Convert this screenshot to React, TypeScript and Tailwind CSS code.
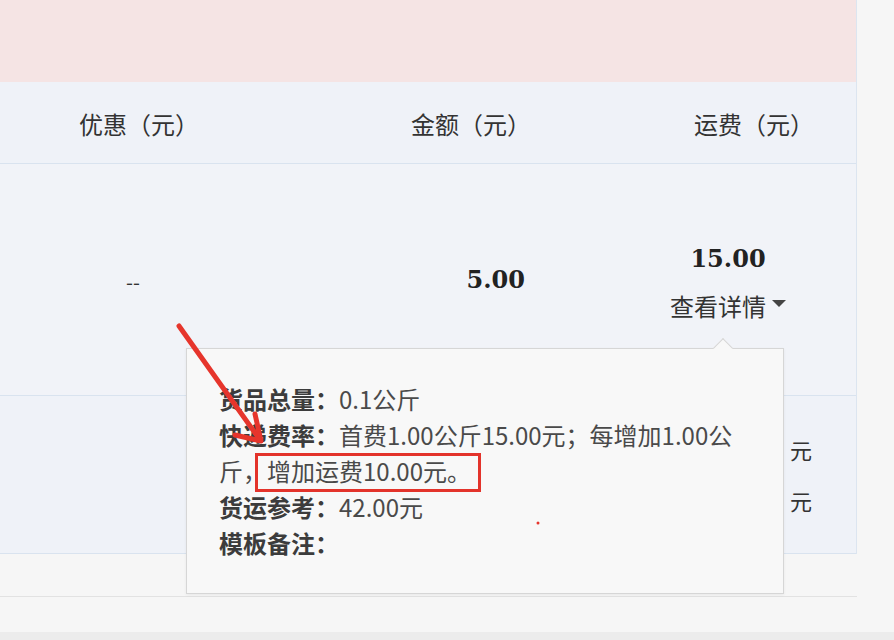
const cjk = "font-['Noto_Sans_CJK_SC','Noto_Sans',sans-serif]";
const num = "font-['DejaVu_Serif',serif] font-bold";

const FreightPopover = () => {
  const rows = [
    { label: '货品总量：', value: '0.1公斤' },
    { label: '快递费率：', value: '首费1.00公斤15.00元；每增加1.00公' },
  ];

  return (
    <div className="absolute left-[186px] top-[348px] w-[598px] h-[246px] border border-[#d6d6d6] bg-[#f8f8f8] shadow-[0_1px_3px_rgba(0,0,0,0.06)]">
      {/* little pointer up to 查看详情 */}
      <div className="absolute left-[529px] -top-[8px] w-[14px] h-[14px] rotate-45 border-l border-t border-[#d6d6d6] bg-[#f8f8f8]"></div>

      <div className={`relative pl-[32px] pt-[32px] text-[24px] leading-[36px] text-[#4a4a4a] ${cjk}`}>
        {rows.map((row, i) => (
          <div key={i} className="whitespace-nowrap">
            <span className="font-bold text-[#3c3c3c]">{row.label}</span>
            <span>{row.value}</span>
          </div>
        ))}
        <div className="whitespace-nowrap">斤，增加运费10.00元。</div>
        <div className="whitespace-nowrap">
          <span className="font-bold text-[#3c3c3c]">货运参考：</span>
          <span>42.00元</span>
        </div>
        <div>
          <span className="font-bold text-[#3c3c3c]">模板备注：</span>
        </div>
      </div>

      {/* annotation box */}
      <div className="absolute left-[68px] top-[104px] w-[226px] h-[39px] border-[3px] border-[#e3332b]"></div>
    </div>
  );
};

const App = () => {
  return (
    <div className={`relative w-[894px] h-[640px] overflow-hidden bg-[#f6f6f6] flex flex-col ${cjk}`}>
      <div className="w-[857px] border-r border-[#dce5f0]">
        <div className="h-[82px] bg-[#f5e4e4]"></div>

        <div className="h-[82px] grid grid-cols-[266px_334px_256px] items-center bg-[#eff2f8] border-b border-[#d9e3ef] text-[24px] text-[#333] pt-[2px]">
          <div className="text-center pl-[12px]">优惠（元）</div>
          <div className="text-right pr-[69px]">金额（元）</div>
          <div className="text-right pr-[42px]">运费（元）</div>
        </div>

        <div className="h-[232px] grid grid-cols-[266px_334px_256px] items-center bg-[#f1f3f8] border-b border-[#d9e3ef] text-[#333]">
          <div className="text-center text-[20px] pt-[4px]">--</div>
          <div className={`text-right pr-[75px] text-[24px] leading-[28px] text-[#222] ${num}`}>5.00</div>
          <div className="flex flex-col items-center pt-[6px]">
            <div className={`text-[24px] leading-[28px] text-[#222] ${num}`}>15.00</div>
            <div className="mt-[18px] flex items-center gap-[6px] text-[24px] leading-[30px] text-[#333]">
              <span>查看详情</span>
              <span className="w-0 h-0 border-l-[7px] border-r-[7px] border-t-[7px] border-l-transparent border-r-transparent border-t-[#444] -mt-[4px]"></span>
            </div>
          </div>
        </div>

        <div className="h-[158px] grid grid-cols-[266px_334px_256px] bg-[#eff2f8] border-b border-[#d9e3ef] text-[22px] text-[#333]">
          <div></div>
          <div></div>
          <div className="flex flex-col items-end pr-[44px] pt-[28px] leading-[51px]">
            <div>元</div>
            <div>元</div>
          </div>
        </div>
      </div>

      <div className="h-[43px] w-[857px] border-b border-[#e2e2e2]"></div>
      <div className="flex-1"></div>
      <div className="h-[8px] bg-[#ececec]"></div>

      <FreightPopover />

      {/* red annotation arrow */}
      <svg className="absolute inset-0 pointer-events-none" width="894" height="640" viewBox="0 0 894 640">
        <line x1="179" y1="326" x2="258" y2="437" stroke="#e6352c" strokeWidth="5" strokeLinecap="round" />
        <polyline points="255,414 261,441 235,435" fill="none" stroke="#e6352c" strokeWidth="5" strokeLinecap="round" strokeLinejoin="round" />
        <circle cx="538" cy="523" r="1.5" fill="#e6352c" />
      </svg>
    </div>
  );
};

export default App;
